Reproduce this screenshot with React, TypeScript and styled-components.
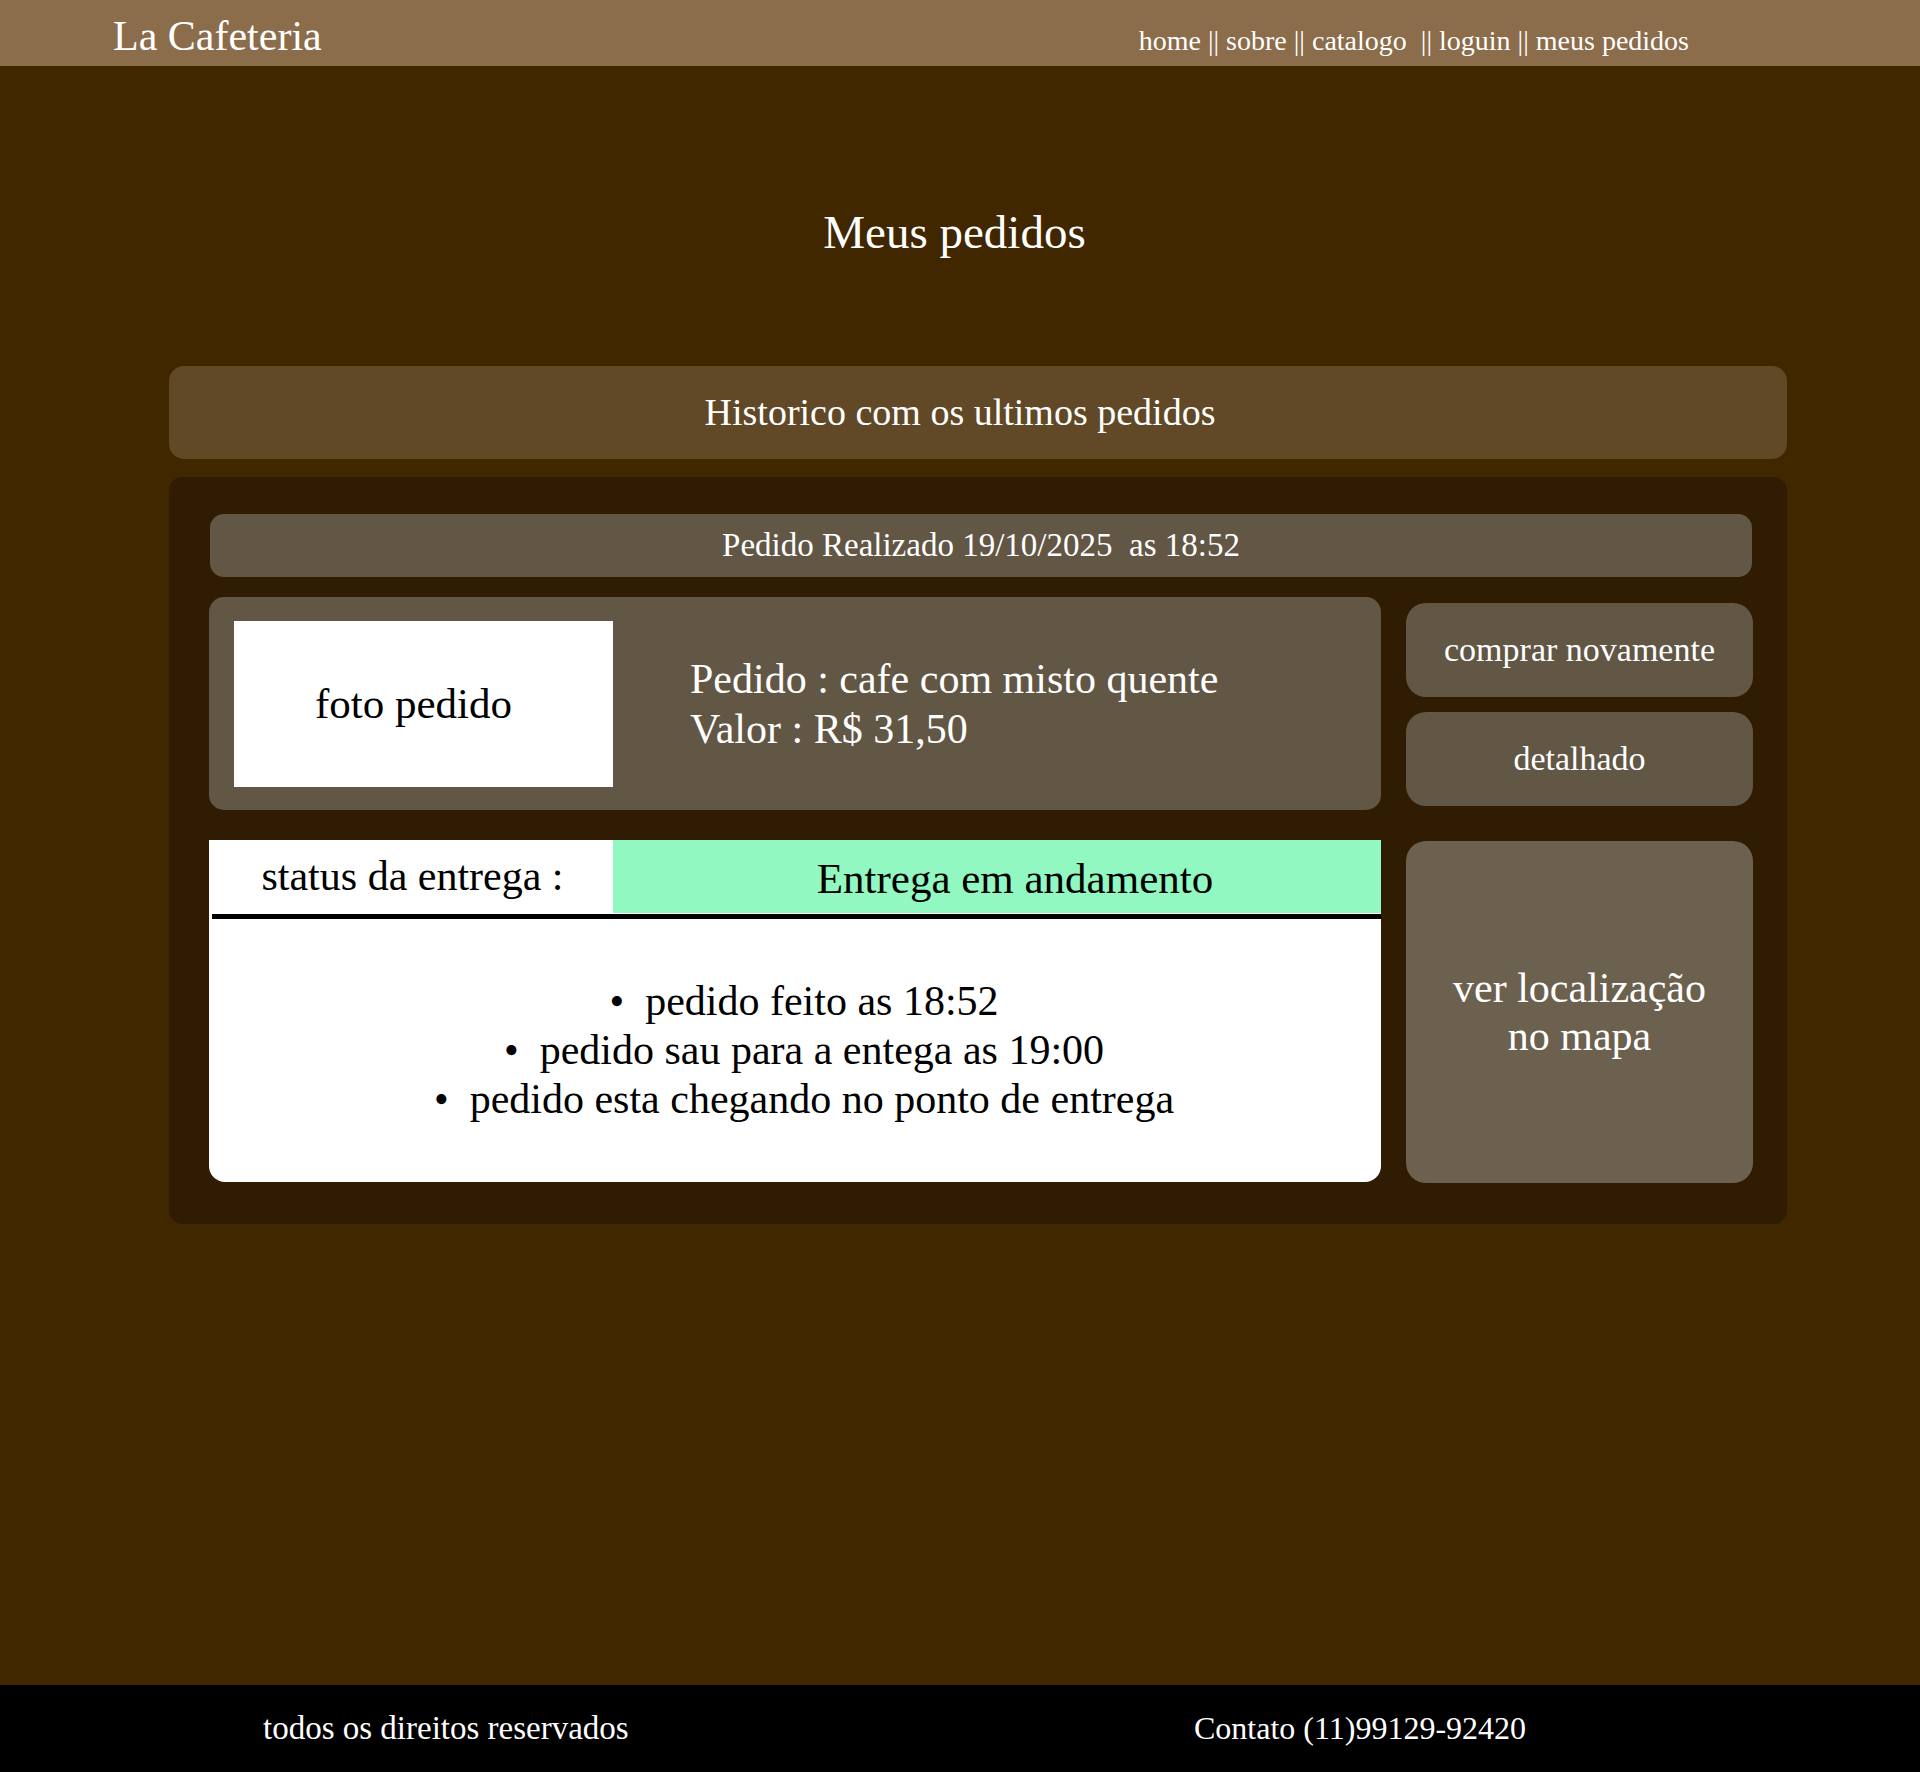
import React from "react";
import styled, { createGlobalStyle } from "styled-components";

const GlobalStyle = createGlobalStyle`
  html, body {
    margin: 0;
    padding: 0;
    background: #412700;
  }
  body {
    font-family: "Liberation Serif", "Times New Roman", serif;
    color: #ffffff;
  }
  * { box-sizing: border-box; }
`;

const Page = styled.div`
  min-height: 100vh;
  display: flex;
  flex-direction: column;
  background: #412700;
`;

const Header = styled.header`
  height: 66px;
  background: #8b6c4b;
  display: flex;
  align-items: baseline;
  justify-content: space-between;
  padding: 12px 231px 0 113px;
`;

const Logo = styled.div`
  font-size: 42px;
  line-height: 1.15;
  color: #fff;
`;

const Nav = styled.nav`
  font-size: 28px;
  line-height: 1.15;
  color: #fff;
  white-space: pre;
`;

const Main = styled.main`
  flex: 1;
  padding: 139px 133px 60px 169px;
  display: flex;
  flex-direction: column;
`;

const Title = styled.h1`
  margin: 0 -133px 107px -169px;
  font-size: 47px;
  line-height: 54px;
  font-weight: normal;
  text-align: center;
  padding-right: 11px;
`;

const HistoryBar = styled.div`
  height: 93px;
  background: #614927;
  border-radius: 15px;
  display: flex;
  align-items: center;
  justify-content: center;
  padding-right: 36px;
  font-size: 38px;
  line-height: 1.15;
`;

const Panel = styled.section`
  margin-top: 18px;
  background: #2f1c02;
  border-radius: 14px;
  padding: 37px 34px 41px 40px;
  display: grid;
  grid-template-columns: 1172px 347px;
  column-gap: 25px;
`;

const DateBar = styled.div`
  grid-column: 1 / -1;
  height: 63px;
  margin: 0 1px 0 1px;
  background: #625645;
  border-radius: 14px;
  display: flex;
  align-items: center;
  justify-content: center;
  font-size: 33px;
  line-height: 1.15;
`;

const OrderCard = styled.div`
  margin-top: 20px;
  height: 213px;
  background: #625645;
  border-radius: 15px;
  padding: 24px 25px 23px 25px;
  display: flex;
  align-items: center;
  gap: 77px;
`;

const Photo = styled.div`
  width: 379px;
  height: 166px;
  background: #ffffff;
  color: #000;
  display: flex;
  align-items: center;
  justify-content: center;
  padding-right: 20px;
  font-size: 43px;
  line-height: 1.15;
  align-self: flex-start;
`;

const OrderInfo = styled.div`
  font-size: 42px;
  line-height: 50px;
  color: #fff;
`;

const ActionColumn = styled.div`
  margin-top: 26px;
  display: flex;
  flex-direction: column;
  gap: 15px;
`;

const ActionButton = styled.button<{ $tall?: boolean; $light?: boolean }>`
  height: ${(p) => (p.$tall ? "342px" : "94px")};
  width: 100%;
  border: none;
  border-radius: 20px;
  background: ${(p) => (p.$light ? "#6c604e" : "#625645")};
  color: #fff;
  font-family: "Liberation Serif", "Times New Roman", serif;
  font-size: ${(p) => (p.$tall ? "42px" : "34px")};
  line-height: ${(p) => (p.$tall ? "48px" : "1.15")};
  padding: ${(p) => (p.$tall ? "0 34px" : "0")};
  cursor: pointer;
`;

const MapCell = styled.div`
  margin-top: 31px;
`;

const StatusCard = styled.div`
  margin-top: 30px;
  height: 342px;
  background: #ffffff;
  border-radius: 0 0 16px 16px;
  color: #000;
  display: flex;
  flex-direction: column;
`;

const StatusHeader = styled.div`
  display: grid;
  grid-template-columns: 401px 1fr;
  margin-left: 3px;
  border-bottom: 5px solid #000;
  height: 79px;
`;

const StatusLabel = styled.div<{ $active?: boolean }>`
  background: ${(p) => (p.$active ? "#90f8c0" : "transparent")};
  display: flex;
  align-items: center;
  justify-content: center;
  font-size: ${(p) => (p.$active ? "43px" : "42px")};
  line-height: 1.15;
  padding: ${(p) => (p.$active ? "5px 0 0 36px" : "0")};
  margin-bottom: 1px;
`;

const Steps = styled.ul`
  flex: 1;
  margin: 0;
  padding: 0 0 0 18px;
  list-style: none;
  display: flex;
  flex-direction: column;
  align-items: center;
  justify-content: center;
  font-size: 42px;
  line-height: 49px;
`;

const Step = styled.li`
  &::before {
    content: "•";
    margin-right: 21px;
  }
`;

const Footer = styled.footer`
  height: 87px;
  background: #000;
  display: grid;
  grid-template-columns: 931px 1fr;
  align-items: center;
  padding-left: 263px;
  color: #fff;
`;

const FooterText = styled.div<{ $size: number }>`
  font-size: ${(p) => p.$size}px;
  line-height: 1.15;
`;

export default function App() {
  return (
    <>
      <GlobalStyle />
      <Page>
        <Header>
          <Logo>La Cafeteria</Logo>
          <Nav>{"home || sobre || catalogo \u00a0|| loguin || meus pedidos"}</Nav>
        </Header>
        <Main>
          <Title>Meus pedidos</Title>
          <HistoryBar>Historico com os ultimos pedidos</HistoryBar>
          <Panel>
            <DateBar>Pedido Realizado 19/10/2025 &nbsp;as 18:52</DateBar>
            <OrderCard>
              <Photo>foto pedido</Photo>
              <OrderInfo>
                <div>Pedido : cafe com misto quente</div>
                <div>Valor : R$ 31,50</div>
              </OrderInfo>
            </OrderCard>
            <ActionColumn>
              <ActionButton>comprar novamente</ActionButton>
              <ActionButton>detalhado</ActionButton>
            </ActionColumn>
            <StatusCard>
              <StatusHeader>
                <StatusLabel>status da entrega :</StatusLabel>
                <StatusLabel $active>Entrega em andamento</StatusLabel>
              </StatusHeader>
              <Steps>
                <Step>pedido feito as 18:52</Step>
                <Step>pedido sau para a entega as 19:00</Step>
                <Step>pedido esta chegando no ponto de entrega</Step>
              </Steps>
            </StatusCard>
            <MapCell>
              <ActionButton $tall $light>ver localização no mapa</ActionButton>
            </MapCell>
          </Panel>
        </Main>
        <Footer>
          <FooterText $size={33}>todos os direitos reservados</FooterText>
          <FooterText $size={32}>Contato (11)99129-92420</FooterText>
        </Footer>
      </Page>
    </>
  );
}
